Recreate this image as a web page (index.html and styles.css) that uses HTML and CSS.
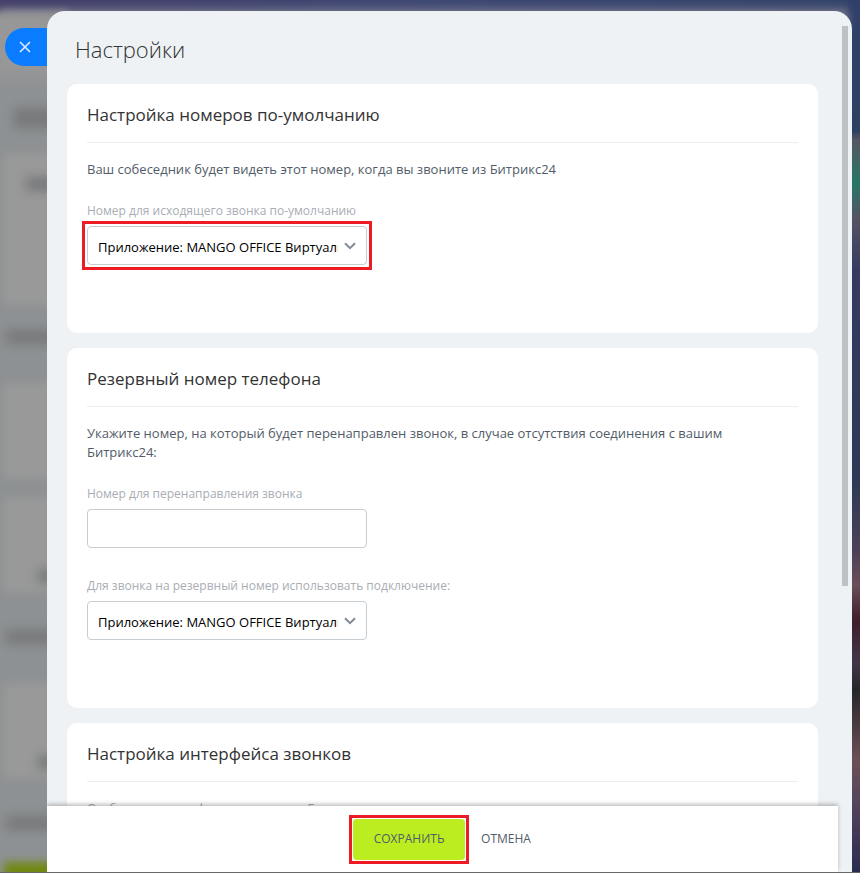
FILE: index.html
```html
<!DOCTYPE html>
<html lang="ru">
<head>
<meta charset="utf-8">
<meta name="viewport" content="width=device-width, initial-scale=1">
<title>Настройки</title>
<link rel="stylesheet" href="styles.css">
</head>
<body>
<div class="backdrop" aria-hidden="true">
  <div class="wallpaper"></div>
  <div class="underlay">
    <i class="smudge title"></i>
    <i class="tile first"><i class="smudge"></i></i>
    <i class="smudge"></i>
    <i class="tile short"></i>
    <i class="tile short"><i class="smudge low"></i></i>
    <i class="smudge"></i>
    <i class="tile short"><i class="smudge low"></i></i>
    <i class="smudge"></i>
    <i class="strip"></i>
  </div>
</div>
<div class="slider">
  <button class="close" type="button" aria-label="Закрыть">
    <svg viewBox="0 0 12 12" width="12" height="12"><path d="M1.5 1.5 10.5 10.5M10.5 1.5 1.5 10.5" fill="none" stroke="#d9eaff" stroke-width="1.7" stroke-linecap="round"/></svg>
  </button>
  <div class="panel">
    <main class="content">
      <h1>Настройки</h1>
      <section class="card">
        <h2>Настройка номеров по-умолчанию</h2>
        <p>Ваш собеседник будет видеть этот номер, когда вы звоните из Битрикс24</p>
        <div class="field">
          <label for="line">Номер для исходящего звонка по-умолчанию</label>
          <div class="control marked">
            <select id="line"><option>Приложение: MANGO OFFICE Виртуальная АТС</option></select>
            <svg class="chevron" viewBox="0 0 12 8" width="12" height="8"><path d="M1 1.2 6 6.2 11 1.2" fill="none" stroke="#828b95" stroke-width="2"/></svg>
          </div>
        </div>
      </section>
      <section class="card">
        <h2>Резервный номер телефона</h2>
        <p>Укажите номер, на который будет перенаправлен звонок, в случае отсутствия соединения с вашим Битрикс24:</p>
        <div class="field">
          <label for="forward">Номер для перенаправления звонка</label>
          <div class="control"><input id="forward" type="text"></div>
        </div>
        <div class="field">
          <label for="backup">Для звонка на резервный номер использовать подключение:</label>
          <div class="control">
            <select id="backup"><option>Приложение: MANGO OFFICE Виртуальная АТС</option></select>
            <svg class="chevron" viewBox="0 0 12 8" width="12" height="8"><path d="M1 1.2 6 6.2 11 1.2" fill="none" stroke="#828b95" stroke-width="2"/></svg>
          </div>
        </div>
      </section>
      <section class="card">
        <h2>Настройка интерфейса звонков</h2>
        <div class="field">
          <label for="chat">Отображение телефонных звонков в Бизнес-чате:</label>
          <div class="control"><input id="chat" type="text"></div>
        </div>
      </section>
    </main>
    <footer class="actions">
      <span class="frame"><button class="save" type="button">СОХРАНИТЬ</button></span>
      <button class="cancel" type="button">ОТМЕНА</button>
    </footer>
    <span class="scrollbar"></span>
  </div>
</div>
</body>
</html>
```
FILE: styles.css
```css
* { box-sizing: border-box; }

body {
  margin: 0;
  height: 100vh;
  overflow: hidden;
  font-family: "Open Sans", "Noto Sans", sans-serif;
  font-size: 13px;
  line-height: 19px;
  color: #525c69;
}

.backdrop {
  position: absolute;
  inset: 0;
  overflow: hidden;
  background: #2f3558;
}

.wallpaper {
  position: absolute;
  inset: 0;
  background:
    linear-gradient(180deg, #30406a 0, #2f4162 15%, #555761 16%, #287567 21%, #555365 25%, #353b60 31%, #2c3a56 55%, #4b4058 63%, #6a4e5a 67%, #401e2c 71%, #403648 76%, #262729 79%, #6c5057 87%, #54435c 92%, #292b50 100%) right / 12px 100% no-repeat,
    linear-gradient(90deg, #45416b, #3e4874 50%, #34446a);
}

.wallpaper::after {
  content: "";
  position: absolute;
  inset: 9px 12px auto 0;
  height: 20px;
  background: #77798a;
  filter: blur(4px);
}

.underlay {
  position: absolute;
  inset: 12px auto -12px -12px;
  width: 80px;
  display: flex;
  flex-direction: column;
  padding: 92px 0 0 16px;
  background: linear-gradient(180deg, #979797 0, #979797 55px, #8e9193 75px);
  filter: blur(4px);
}

.tile { display: block; flex: none; background: #999; height: 94px; margin-bottom: 20px; padding: 1px 0; }
.tile.first { height: 150px; margin-bottom: 26px; }
.tile .smudge { margin: 22px 0 0 22px; }
.tile .smudge.low { margin: 70px 0 0 34px; }

.smudge { display: block; flex: none; height: 14px; margin: 0 0 40px 2px; background: #77797a; filter: blur(3px); }
.smudge.title { margin: 4px 0 26px 10px; height: 20px; }
.short + .smudge { margin-top: 18px; }
.strip { flex: none; height: 40px; margin-top: -8px; background: #708912; }

.slider {
  position: relative;
  display: flex;
  align-items: flex-start;
  height: 100%;
  padding: 11px 8px 0 5px;
  border-bottom: 1px solid #666;
}

.close {
  flex: none;
  width: 42px;
  height: 38px;
  margin-top: 17px;
  padding: 0 0 0 14px;
  display: flex;
  align-items: center;
  border: 0;
  border-radius: 19px 0 0 19px;
  background: #0a7cff;
}

.panel {
  position: relative;
  flex: 1;
  min-width: 0;
  height: 100%;
  display: flex;
  flex-direction: column;
  overflow: hidden;
  border-radius: 18px 18px 0 0;
  background: #eef2f4;
}

.content {
  flex: 1;
  min-height: 0;
  overflow: hidden;
  padding: 22px 34px 0 20px;
}

h1 {
  margin: 0 0 19px 8px;
  font-size: 22px;
  font-weight: 300;
  line-height: 32px;
  color: #333;
}

.card {
  margin-bottom: 15px;
  padding: 20px 20px 68px;
  border-radius: 10px;
  background: #fff;
}

h2 {
  margin: 0 0 17px;
  padding-bottom: 16px;
  border-bottom: 1px solid #edeef0;
  font-size: 17px;
  font-weight: 400;
  line-height: 22px;
  color: #333;
}

p {
  max-width: 95%;
  margin: 0 0 22px;
}

.field + .field { margin-top: 28px; }

label {
  display: block;
  margin-bottom: 6px;
  font-size: 12px;
  line-height: 19px;
  color: #a8adb4;
}

.control { position: relative; width: 280px; max-width: 100%; }

.marked { outline: 3px solid #ed1c24; outline-offset: 2px; }

select, input {
  display: block;
  width: 100%;
  height: 39px;
  padding: 2px 28px 0 10px;
  border: 1px solid #c6cdd3;
  border-radius: 4px;
  background: #fff;
  appearance: none;
  font: 13px "Open Sans", "Noto Sans", sans-serif;
  color: #000;
}

.chevron {
  position: absolute;
  top: 16px;
  right: 11px;
  pointer-events: none;
}

.actions {
  position: relative;
  display: flex;
  align-items: center;
  justify-content: center;
  gap: 12px;
  height: 66px;
  margin-right: 14px;
  padding-right: 5px;
  background: #fff;
  box-shadow: 0 -2px 4px rgba(0, 0, 0, 0.25);
}

.frame { padding: 1px; border: 3px solid #ed1c24; }

.save, .cancel {
  border: 0;
  background: none;
  font: 500 12px/20px "Open Sans", "Noto Sans", sans-serif;
  color: #525c69;
  padding: 0;
}

.save {
  display: block;
  width: 112px;
  height: 41px;
  border-radius: 4px;
  background: #bbed21;
}

.scrollbar {
  position: absolute;
  top: 15px;
  right: 4px;
  width: 6px;
  height: 65%;
  background: #bec2c4;
}
```
